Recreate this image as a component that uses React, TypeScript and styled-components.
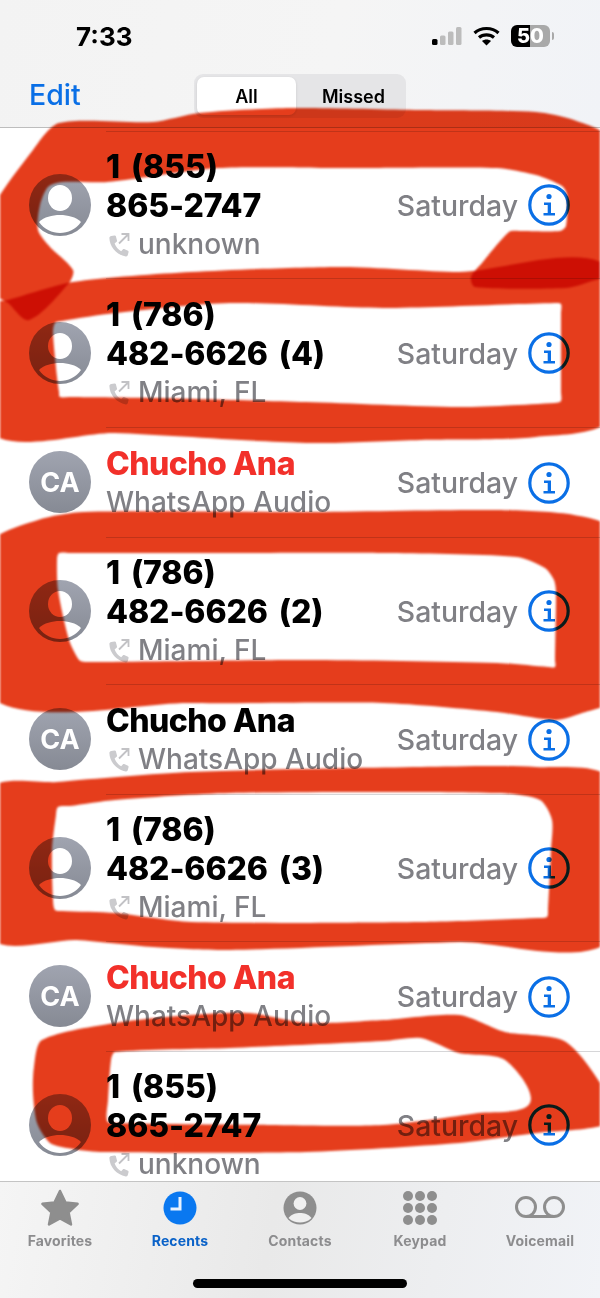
import React from 'react';
import styled, { createGlobalStyle } from 'styled-components';

const BLUE = '#0a6fe6';

const GlobalStyle = createGlobalStyle`
  html, body {
    margin: 0;
    padding: 0;
    background: #fff;
    font-family: Inter, "Noto Sans", "Liberation Sans", sans-serif;
  }
`;

const Phone = styled.div`
  position: relative;
  width: 600px;
  height: 1298px;
  display: flex;
  flex-direction: column;
  overflow: hidden;
  background: #fff;
`;

const TopArea = styled.header`
  height: 127px;
  flex-shrink: 0;
  background: linear-gradient(100deg, #f3f3f3 0%, #f5f5f5 55%, #f1f3f7 100%);
  border-bottom: 1px solid #bdbdbd;
  display: flex;
  flex-direction: column;
`;

const StatusBar = styled.div`
  height: 72px;
  padding: 0 46px 0 76px;
  display: flex;
  align-items: center;
  justify-content: space-between;
`;

const Time = styled.span`
  font-size: 26px;
  font-weight: 700;
  color: #000;
`;

const StatusIcons = styled.div`
  display: flex;
  align-items: center;
  gap: 11px;
`;

const Battery = styled.div`
  position: relative;
  width: 39px;
  height: 22px;
  border-radius: 6px;
  background: linear-gradient(90deg, #000 0 50%, #a9a9a9 50% 100%);
  color: #fff;
  font-size: 20px;
  font-weight: 800;
  line-height: 22px;
  text-align: center;
  margin-right: 4px;

  &::after {
    content: '';
    position: absolute;
    right: -4px;
    top: 7px;
    width: 2px;
    height: 8px;
    border-radius: 0 2px 2px 0;
    background: #a9a9a9;
  }
`;

const NavBar = styled.div`
  flex: 1;
  padding: 2px 29px 0;
  display: flex;
  align-items: flex-start;
`;

const EditLink = styled.span`
  width: 165px;
  margin-top: 3px;
  font-size: 28.5px;
  font-weight: 500;
  line-height: 36px;
  color: ${BLUE};
`;

const Segments = styled.div`
  width: 212px;
  height: 44px;
  padding: 3px;
  box-sizing: border-box;
  border-radius: 9px;
  background: #e5e5e7;
  display: flex;
`;

const Segment = styled.div<{ $active?: boolean }>`
  flex: ${(p) => (p.$active ? '0 0 99px' : '1')};
  padding-left: ${(p) => (p.$active ? '0' : '8px')};
  border-radius: 7px;
  background: ${(p) => (p.$active ? '#fff' : 'transparent')};
  box-shadow: ${(p) => (p.$active ? '0 1px 3px rgba(0,0,0,0.12)' : 'none')};
  display: flex;
  align-items: center;
  justify-content: center;
  font-size: 18px;
  font-weight: 600;
  color: #000;
`;

const List = styled.main`
  flex: 1;
  min-height: 0;
  padding-top: 3px;
  overflow: hidden;
  background: #fff;
`;

const Row = styled.div<{ $height: number }>`
  height: ${(p) => p.$height}px;
  padding-left: 29px;
  display: flex;
  align-items: center;
  gap: 15px;
`;

const AvatarCircle = styled.div`
  flex-shrink: 0;
  width: 62px;
  height: 62px;
  border-radius: 50%;
  background: linear-gradient(180deg, #a0a4b0, #868a94);
  color: #fff;
  font-size: 27px;
  font-weight: 700;
  display: flex;
  align-items: center;
  justify-content: center;
  overflow: hidden;
`;

const RowBody = styled.div`
  flex: 1;
  align-self: stretch;
  padding-right: 30px;
  border-top: 1px solid #d6d6d8;
  display: flex;
  align-items: center;
  justify-content: space-between;
`;

const CallText = styled.div`
  padding-top: 2px;
`;

// phone numbers carry a wider word gap, contact names sit a little tighter
const NameLine = styled.div<{ $missed?: boolean; $contact?: boolean }>`
  font-size: 32px;
  font-weight: 800;
  line-height: 38.5px;
  letter-spacing: ${(p) => (p.$contact ? '-0.55px' : '-0.1px')};
  word-spacing: ${(p) => (p.$contact ? '0' : '4px')};
  white-space: nowrap;
  color: ${(p) => (p.$missed ? '#f2302a' : '#000')};
`;

const SubLine = styled.div`
  display: flex;
  align-items: center;
  gap: 8px;
  font-size: 28px;
  font-weight: 500;
  line-height: 39px;
  white-space: nowrap;
  color: #808085;
`;

const RowEnd = styled.div`
  display: flex;
  align-items: center;
  gap: 10px;
`;

const When = styled.span`
  font-size: 28.4px;
  font-weight: 500;
  color: #808085;
`;

const TabBar = styled.nav`
  height: 117px;
  flex-shrink: 0;
  box-sizing: border-box;
  position: relative;
  border-top: 1px solid #c4c4c4;
  padding-top: 7px;
  background: linear-gradient(100deg, #f5f5f5 0%, #e9e9e9 45%, #f1f3f7 100%);
  display: flex;
`;

const Tab = styled.div<{ $active?: boolean }>`
  flex: 1;
  height: 60px;
  display: flex;
  flex-direction: column;
  align-items: center;
  justify-content: space-between;
  font-size: 14px;
  font-weight: 700;
  letter-spacing: 0.15px;
  color: ${(p) => (p.$active ? '#0a62c8' : '#8c8c8e')};
`;

const TabIcon = styled.svg`
  width: 54px;
  height: 38px;
  fill: #8e8e8e;
`;

const HomeIndicator = styled.div`
  position: absolute;
  left: 193px;
  bottom: 10px;
  width: 214px;
  height: 9px;
  border-radius: 5px;
  background: #000;
`;

// Hand-drawn pen strokes lying over the whole screen
const InkLayer = styled.svg`
  position: absolute;
  inset: 0;
  width: 600px;
  height: 1298px;
  pointer-events: none;
  mix-blend-mode: multiply;
  filter: blur(1.3px);
`;

const InkStroke = styled.path`
  fill: #e53d1c;
  fill-rule: evenodd;
  mix-blend-mode: multiply;
`;

type Point = [number, number];

// closed curve through the points; tangents scale with the chord so corners stay tight
function smooth(points: Point[]) {
  const n = points.length;
  const tangent = (a: Point, b: Point, len: number): Point => {
    const dx = b[0] - a[0];
    const dy = b[1] - a[1];
    const m = Math.hypot(dx, dy) || 1;
    return [(dx / m) * len * 0.25, (dy / m) * len * 0.25];
  };
  let d = `M${points[0][0]} ${points[0][1]}`;
  for (let i = 0; i < n; i++) {
    const p0 = points[(i - 1 + n) % n];
    const p1 = points[i];
    const p2 = points[(i + 1) % n];
    const p3 = points[(i + 2) % n];
    const len = Math.hypot(p2[0] - p1[0], p2[1] - p1[1]);
    const t1 = tangent(p0, p2, len);
    const t2 = tangent(p1, p3, len);
    d += `C${(p1[0] + t1[0]).toFixed(1)} ${(p1[1] + t1[1]).toFixed(1)} ${(p2[0] - t2[0]).toFixed(1)} ${(p2[1] - t2[1]).toFixed(1)} ${p2[0]} ${p2[1]}`;
  }
  return d + 'Z';
}

const strokes: { outer: Point[]; inner: Point[] }[] = [
  {
    outer: [
      [59, 123], [153, 122], [199, 113], [291, 108], [421, 110], [536, 112], [574, 120], [610, 140],
      [610, 272], [589, 282], [566, 288], [475, 287], [471, 277], [482, 263], [509, 232], [520, 231],
      [560, 231], [566, 226], [567, 195], [562, 186], [536, 175], [497, 168], [344, 168], [218, 168],
      [107, 182], [62, 182], [48, 187], [40, 205], [38, 230], [50, 247], [73, 270], [69, 283], [29, 320],
      [8, 303], [-10, 290], [-10, 215], [33, 150],
    ],
    inner: [],
  },
  {
    outer: [
      [-10, 305], [8, 300], [73, 282], [191, 272], [344, 267], [459, 272], [610, 268], [610, 418],
      [536, 437], [421, 440], [306, 443], [115, 433], [-10, 432],
    ],
    inner: [
      [561, 304], [555, 303], [383, 308], [230, 303], [115, 313], [62, 321], [55, 323], [53, 333],
      [57, 377], [59, 392], [60, 397], [70, 397], [153, 398], [306, 402], [459, 407], [555, 403],
      [561, 401], [561, 392], [561, 313],
    ],
  },
  {
    outer: [
      [-10, 545], [38, 520], [84, 512], [306, 512], [497, 510], [574, 515], [610, 530], [610, 700],
      [582, 713], [555, 720], [497, 712], [383, 703], [191, 703], [-10, 697],
    ],
    inner: [
      [59, 553], [70, 553], [230, 553], [383, 553], [517, 557], [545, 568], [554, 580], [556, 592],
      [555, 660], [555, 667], [548, 667], [497, 663], [306, 660], [85, 662], [79, 660], [69, 640],
      [58, 590], [57, 560],
    ],
  },
  {
    outer: [
      [-10, 790], [57, 782], [191, 772], [421, 767], [536, 767], [610, 780], [610, 940], [459, 942],
      [230, 950], [153, 947], [77, 940], [-10, 937],
    ],
    inner: [
      [58, 807], [70, 806], [115, 800], [230, 793], [497, 793], [540, 800], [552, 820], [551, 850],
      [548, 910], [547, 917], [538, 918], [421, 922], [191, 922], [115, 913], [62, 911], [55, 910],
      [53, 900], [52, 850], [56, 815],
    ],
  },
  {
    outer: [
      [42, 1040], [115, 1023], [191, 1015], [249, 1013], [306, 1023], [383, 1020], [459, 1015],
      [505, 1032], [566, 1042], [610, 1100], [610, 1123], [536, 1133], [459, 1143], [306, 1152],
      [100, 1152], [67, 1148], [50, 1143], [37, 1123], [33, 1093], [34, 1067],
    ],
    inner: [
      [115, 1052], [230, 1048], [383, 1041], [421, 1038], [459, 1053], [505, 1060], [530, 1103],
      [478, 1113], [383, 1125], [268, 1125], [115, 1123], [107, 1121], [108, 1100], [111, 1060],
    ],
  },
];

function Ink() {
  return (
    <InkLayer viewBox="0 0 600 1298">
      {strokes.map((s, i) => (
        <InkStroke key={i} d={smooth(s.outer) + (s.inner.length ? smooth(s.inner) : '')} />
      ))}
    </InkLayer>
  );
}

function SignalIcon() {
  return (
    <svg width="30" height="18" viewBox="0 0 30 18">
      <rect x="0" y="12" width="5.5" height="6" rx="1.5" fill="#000" />
      <rect x="8" y="8.5" width="5.5" height="9.5" rx="1.5" fill="#bcbcbc" />
      <rect x="16" y="4.5" width="5.5" height="13.5" rx="1.5" fill="#bcbcbc" />
      <rect x="24" y="0" width="5.5" height="18" rx="1.5" fill="#bcbcbc" />
    </svg>
  );
}

function WifiIcon() {
  return (
    <svg width="27" height="20" viewBox="0 0 27 20" fill="none" stroke="#000" strokeWidth="3.2">
      <path d="M1.5 7 C8 1 19 1 25.5 7" />
      <path d="M6 11.5 C10 8 17 8 21 11.5" />
      <path d="M13.5 19.5 L9 15 C11.5 13 15.5 13 18 15 Z" fill="#000" stroke="none" />
    </svg>
  );
}

function PersonAvatar() {
  return (
    <svg width="62" height="62" viewBox="0 0 62 62">
      <ellipse cx="31" cy="24" rx="12" ry="13" fill="#fff" />
      <path d="M10 48 C15 43 23 41 31 41 C39 41 47 43 52 48 C46.5 55.5 39 59 31 59 C23 59 15.5 55.5 10 48 Z" fill="#fff" />
    </svg>
  );
}

function OutgoingCallIcon() {
  return (
    <svg width="24" height="26" viewBox="0 0 24 26">
      <path
        d="M5.2 4 L8.6 3.4 C9.2 3.3 9.6 3.6 9.8 4.1 L11 8.6 C11.1 9.1 11 9.5 10.6 9.8 L8.6 11.4 C9.8 14.6 12.2 17.6 15.2 19.2 L17 17.2 C17.3 16.9 17.8 16.8 18.2 17 L22 18.8 C22.5 19 22.7 19.5 22.6 20 L21.8 23 C21.6 24 20.8 24.6 19.8 24.4 C10.6 22.8 3.6 15 3.4 6 C3.4 5 4.2 4.2 5.2 4 Z"
        fill="#cbcbce"
      />
      <path d="M13 11.5 L22 2.5 M15.5 2 H22.5 V9" fill="none" stroke="#c2c2c5" strokeWidth="1.8" />
    </svg>
  );
}

function InfoIcon() {
  return (
    <svg width="42" height="42" viewBox="0 0 42 42">
      <circle cx="21" cy="21" r="19.2" fill="none" stroke={BLUE} strokeWidth="3.2" />
      <circle cx="21" cy="12.5" r="2.6" fill={BLUE} />
      <path d="M16 18.5 H23 V29 H27 V31.5 H15.5 V29 H19.7 V21 H16 Z" fill={BLUE} />
    </svg>
  );
}

function StarIcon() {
  return (
    <TabIcon viewBox="0 0 54 38">
      <path
        d="M27 2 L32.4 13.4 L44.6 14.8 L35.6 23.4 L38 35.4 L27 29.4 L16 35.4 L18.4 23.4 L9.4 14.8 L21.6 13.4 Z"
        strokeLinejoin="round"
        stroke="#8e8e8e"
        strokeWidth="2.5"
      />
    </TabIcon>
  );
}

function ClockIcon() {
  return (
    <TabIcon viewBox="0 0 54 38">
      <circle cx="27" cy="19" r="16.5" fill="#0a78f0" />
      <path d="M27 8 V20 H17.5" fill="none" stroke="#e8f2ff" strokeWidth="3" />
    </TabIcon>
  );
}

function ContactIcon() {
  return (
    <TabIcon viewBox="0 0 54 38">
      <circle cx="27" cy="19" r="16.5" />
      <circle cx="27" cy="14.5" r="6.4" fill="#f0f0f0" />
      <path d="M15.5 29 C18.5 25 23 24 27 24 C31 24 35.5 25 38.5 29 C35 32.5 31 33.4 27 33.4 C23 33.4 19 32.5 15.5 29 Z" fill="#f0f0f0" />
    </TabIcon>
  );
}

function KeypadIcon() {
  const dots = [7, 19, 31];
  return (
    <TabIcon viewBox="0 0 54 38">
      {dots.map((cy) => dots.map((d) => <circle key={`${cy}-${d}`} cx={d + 8} cy={cy} r="5" />))}
    </TabIcon>
  );
}

function VoicemailIcon() {
  return (
    <TabIcon viewBox="0 0 54 38">
      <g fill="none" stroke="#8e8e8e" strokeWidth="3">
        <circle cx="13" cy="18" r="9.5" />
        <circle cx="41" cy="18" r="9.5" />
        <path d="M13 27.5 H41" />
      </g>
    </TabIcon>
  );
}

type Call = {
  initials?: string;
  lines: string[];
  detail: string;
  missed?: boolean;
  outgoing?: boolean;
  height: number;
};

const calls: Call[] = [
  { lines: ['1 (855)', '865-2747'], detail: 'unknown', outgoing: true, height: 147 },
  { lines: ['1 (786)', '482-6626 (4)'], detail: 'Miami, FL', outgoing: true, height: 149 },
  { initials: 'CA', lines: ['Chucho Ana'], detail: 'WhatsApp Audio', missed: true, height: 110 },
  { lines: ['1 (786)', '482-6626 (2)'], detail: 'Miami, FL', outgoing: true, height: 147 },
  { initials: 'CA', lines: ['Chucho Ana'], detail: 'WhatsApp Audio', outgoing: true, height: 110 },
  { lines: ['1 (786)', '482-6626 (3)'], detail: 'Miami, FL', outgoing: true, height: 147 },
  { initials: 'CA', lines: ['Chucho Ana'], detail: 'WhatsApp Audio', missed: true, height: 110 },
  { lines: ['1 (855)', '865-2747'], detail: 'unknown', outgoing: true, height: 147 },
];

function CallRow({ call }: { call: Call }) {
  return (
    <Row $height={call.height}>
      <AvatarCircle>{call.initials ?? <PersonAvatar />}</AvatarCircle>
      <RowBody>
        <CallText>
          {call.lines.map((line) => (
            <NameLine key={line} $missed={call.missed} $contact={Boolean(call.initials)}>
              {line}
            </NameLine>
          ))}
          <SubLine>
            {call.outgoing && <OutgoingCallIcon />}
            {call.detail}
          </SubLine>
        </CallText>
        <RowEnd>
          <When>Saturday</When>
          <InfoIcon />
        </RowEnd>
      </RowBody>
    </Row>
  );
}

export default function App() {
  return (
    <Phone>
      <GlobalStyle />
      <TopArea>
        <StatusBar>
          <Time>7:33</Time>
          <StatusIcons>
            <SignalIcon />
            <WifiIcon />
            <Battery>50</Battery>
          </StatusIcons>
        </StatusBar>
        <NavBar>
          <EditLink>Edit</EditLink>
          <Segments>
            <Segment $active>All</Segment>
            <Segment>Missed</Segment>
          </Segments>
        </NavBar>
      </TopArea>
      <List>
        {calls.map((call, i) => (
          <CallRow key={i} call={call} />
        ))}
      </List>
      <TabBar>
        <Tab>
          <StarIcon />
          Favorites
        </Tab>
        <Tab $active>
          <ClockIcon />
          Recents
        </Tab>
        <Tab>
          <ContactIcon />
          Contacts
        </Tab>
        <Tab>
          <KeypadIcon />
          Keypad
        </Tab>
        <Tab>
          <VoicemailIcon />
          Voicemail
        </Tab>
        <HomeIndicator />
      </TabBar>
      <Ink />
    </Phone>
  );
}
